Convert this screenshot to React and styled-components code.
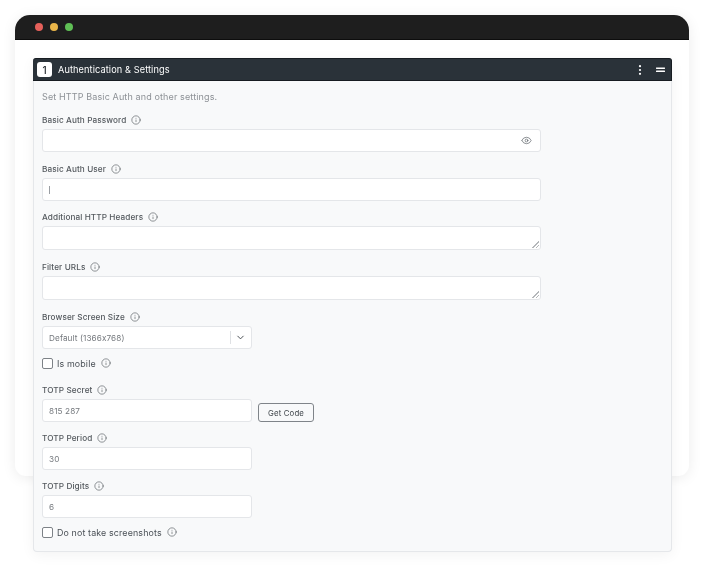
import React from 'react'
import styled, { createGlobalStyle } from 'styled-components'
import { Eye, Info, ChevronDown } from 'lucide-react'

const GlobalStyle = createGlobalStyle`
  html, body {
    margin: 0;
    background: #fff;
    font-family: Inter, "Liberation Sans", sans-serif;
  }
  * { box-sizing: border-box; }
`

const Page = styled.div`
  width: 705px;
  height: 567px;
  padding: 15px 16px 0 15px;
  overflow: hidden;
  filter: blur(0.3px);
`

const Window = styled.div`
  height: 461px;
  border-radius: 15px 15px 11px 11px;
  background: #fff;
  box-shadow: 0 2px 14px rgba(0, 0, 0, 0.08);
`

const TitleBar = styled.div`
  height: 25px;
  padding-left: 20px;
  display: flex;
  align-items: center;
  gap: 7px;
  border-radius: 15px 15px 0 0;
  background: #1e1e1e;
  border-bottom: 1px solid #0d0d0d;
`

const Dot = styled.span`
  width: 8px;
  height: 8px;
  border-radius: 50%;
  background: ${p => p.$color};
`

const Content = styled.div`
  padding: 18px 17px 0 18px;
`

const Panel = styled.section`
  position: relative;
  height: 494px;
  border-radius: 4px;
  background: #f8f9fa;
  border: 1px solid #e5e7ea;
  border-top: 0;
  box-shadow: 0 3px 14px rgba(0, 0, 0, 0.05);
`

const PanelHeader = styled.header`
  height: 23px;
  margin: 0 -1px;
  padding: 0 6px 0 4px;
  display: flex;
  align-items: center;
  border-radius: 3px 3px 0 0;
  background: #2a3239;
  border: 1px solid #171c21;
  border-width: 1px 1px 1px 0;
  color: #fff;
`

const StepBadge = styled.span`
  width: 15px;
  height: 15px;
  display: flex;
  align-items: center;
  justify-content: center;
  border-radius: 3px;
  background: #fff;
  color: #1f252a;
  font-size: 10px;
  font-weight: 500;
`

const PanelTitle = styled.h2`
  flex: 1;
  margin: 0 0 0 6px;
  font-size: 9.2px;
  font-weight: 400;
  letter-spacing: 0.1px;
`

const HeaderIcons = styled.div`
  display: flex;
  align-items: center;
  gap: 14px;
`

const PanelBody = styled.div`
  padding: 10px 0 0 8px;
`

const Intro = styled.p`
  margin: 0 0 10px;
  height: 12px;
  line-height: 12px;
  font-size: 9px;
  letter-spacing: 0.13px;
  color: #8d9196;
`

const Field = styled.div`
  margin-bottom: ${p => p.$gap ?? 10}px;
`

const Label = styled.label`
  height: 12px;
  margin-bottom: 4px;
  padding-top: 1px;
  display: flex;
  align-items: center;
  gap: 5px;
  font-size: 8.2px;
  font-weight: 500;
  letter-spacing: 0.1px;
  color: #53585d;
`

const InfoIcon = styled(Info)`
  width: 10px;
  height: 10px;
  color: #50565c;
  stroke-width: 1.5;
`

const inputBase = `
  display: block;
  border: 1px solid #e4e6e9;
  border-radius: 3px;
  background: #fff;
  padding: 0 6px;
  font-family: inherit;
  font-size: 8.2px;
  letter-spacing: 0.1px;
  color: #75797e;
  outline: none;
`

const InputWrap = styled.div`
  position: relative;
  width: ${p => p.$width}px;
`

const Input = styled.input`
  ${inputBase}
  width: ${p => p.$width}px;
  height: 23px;
`

const TextArea = styled.textarea`
  ${inputBase}
  width: 499px;
  height: 24px;
  min-height: 24px;
  resize: vertical;

  &::-webkit-resizer {
    background: linear-gradient(
        135deg,
        transparent 48%,
        #b4b7ba 48% 58%,
        transparent 58% 72%,
        #b4b7ba 72% 82%,
        transparent 82%
      )
      no-repeat right 1px bottom 1px / 7px 7px;
  }
`

const Caret = styled.span`
  position: absolute;
  left: 7px;
  top: 8px;
  width: 1px;
  height: 8px;
  background: #9a9ea3;
`

const EyeButton = styled.span`
  position: absolute;
  right: 9px;
  top: 6px;
  display: flex;
  color: #5a6066;
`

const Select = styled.div`
  width: 210px;
  height: 23px;
  padding: 0 6px;
  display: flex;
  align-items: center;
  border: 1px solid #e4e6e9;
  border-radius: 3px;
  background: #fff;
  font-size: 8.2px;
  letter-spacing: 0.1px;
  color: #75797e;
`

const SelectValue = styled.span`
  flex: 1;
`

const SelectArrow = styled.span`
  width: 20px;
  margin-right: -5px;
  height: 13px;
  display: flex;
  align-items: center;
  justify-content: center;
  border-left: 1px solid #dfe1e4;
  color: #3d4348;
`

const CheckRow = styled.div`
  height: 12px;
  display: flex;
  align-items: center;
  gap: 4px;
  font-size: 8.9px;
  letter-spacing: 0.13px;
  color: #4b5157;
  margin-bottom: ${p => p.$gap ?? 0}px;
`

const CheckInfo = styled(InfoIcon)`
  margin-left: 1px;
`

const Box = styled.span`
  width: 11px;
  height: 11px;
  border: 1px solid #7d8287;
  border-radius: 2px;
  background: #fff;
`

const Row = styled.div`
  display: flex;
  align-items: flex-end;
  gap: 6px;
`

const GetCode = styled.button`
  width: 56px;
  height: 19px;
  padding: 0;
  border: 1px solid #7f8489;
  border-radius: 3px;
  background: #f8f9fa;
  font-family: inherit;
  font-size: 7.8px;
  letter-spacing: 0.15px;
  color: #3f454a;
`

const FieldLabel = ({ children }) => (
  <Label>
    {children}
    <InfoIcon />
  </Label>
)

const App = () => (
  <Page>
    <GlobalStyle />
    <Window>
      <TitleBar>
        <Dot $color="#e5605a" />
        <Dot $color="#e9b549" />
        <Dot $color="#5fbf55" />
      </TitleBar>
      <Content>
        <Panel>
          <PanelHeader>
            <StepBadge>1</StepBadge>
            <PanelTitle>Authentication &amp; Settings</PanelTitle>
            <HeaderIcons>
              <svg width="4" height="10" viewBox="0 0 4 10" fill="#fff">
                <circle cx="2" cy="1.2" r="1.1" />
                <circle cx="2" cy="5" r="1.1" />
                <circle cx="2" cy="8.8" r="1.1" />
              </svg>
              <svg width="9" height="6" viewBox="0 0 9 6" fill="#fff">
                <rect y="0.4" width="9" height="1.5" rx="0.4" />
                <rect y="3.6" width="9" height="1.5" rx="0.4" />
              </svg>
            </HeaderIcons>
          </PanelHeader>
          <PanelBody>
            <Intro>Set HTTP Basic Auth and other settings.</Intro>
            <Field>
              <FieldLabel>Basic Auth Password</FieldLabel>
              <InputWrap $width={499}>
                <Input $width={499} type="text" readOnly />
                <EyeButton><Eye size={11} strokeWidth={1.5} /></EyeButton>
              </InputWrap>
            </Field>
            <Field $gap={9}>
              <FieldLabel>Basic Auth User</FieldLabel>
              <InputWrap $width={499}>
                <Input $width={499} type="text" readOnly />
                <Caret />
              </InputWrap>
            </Field>
            <Field>
              <FieldLabel>Additional HTTP Headers</FieldLabel>
              <TextArea readOnly />
            </Field>
            <Field>
              <FieldLabel>Filter URLs</FieldLabel>
              <TextArea readOnly />
            </Field>
            <Field $gap={8}>
              <FieldLabel>Browser Screen Size</FieldLabel>
              <Select>
                <SelectValue>Default (1366x768)</SelectValue>
                <SelectArrow><ChevronDown size={11} strokeWidth={2} /></SelectArrow>
              </Select>
            </Field>
            <CheckRow $gap={14}>
              <Box />
              Is mobile
              <CheckInfo />
            </CheckRow>
            <Field $gap={9}>
              <FieldLabel>TOTP Secret</FieldLabel>
              <Row>
                <Input $width={210} type="text" value="815 287" readOnly />
                <GetCode>Get Code</GetCode>
              </Row>
            </Field>
            <Field $gap={9}>
              <FieldLabel>TOTP Period</FieldLabel>
              <Input $width={210} type="text" value="30" readOnly />
            </Field>
            <Field $gap={8}>
              <FieldLabel>TOTP Digits</FieldLabel>
              <Input $width={210} type="text" value="6" readOnly />
            </Field>
            <CheckRow>
              <Box />
              Do not take screenshots
              <CheckInfo />
            </CheckRow>
          </PanelBody>
        </Panel>
      </Content>
    </Window>
  </Page>
)

export default App
